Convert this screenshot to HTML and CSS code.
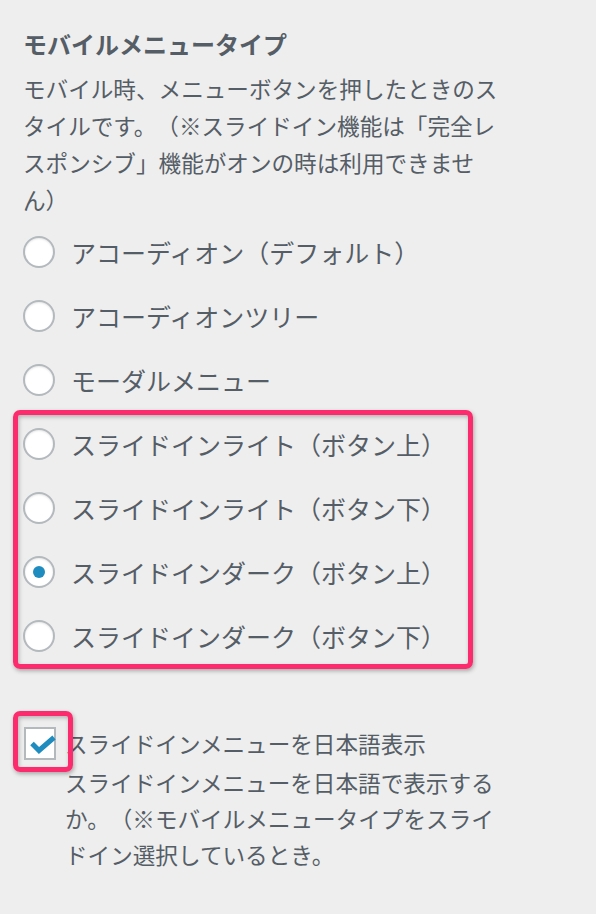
FILE: index.html
```html
<!DOCTYPE html>
<html lang="ja">
<head>
    <meta charset="UTF-8">
    <meta name="viewport" content="width=device-width, initial-scale=1.0">
    <title>モバイルメニュータイプ</title>
    <link rel="stylesheet" href="styles.css">
</head>
<body>
    <div class="panel">
        <h3 class="title">モバイルメニュータイプ</h3>
        <p class="desc">モバイル時、メニューボタンを押したときのスタイルです。（※スライドイン機能は「完全レスポンシブ」機能がオンの時は利用できません）</p>

        <div class="options">
            <label class="option"><input type="radio" name="menu_type"> アコーディオン（デフォルト）</label>
            <label class="option"><input type="radio" name="menu_type"> アコーディオンツリー</label>
            <label class="option"><input type="radio" name="menu_type"> モーダルメニュー</label>
            <div class="marked">
                <label class="option"><input type="radio" name="menu_type"> スライドインライト（ボタン上）</label>
                <label class="option"><input type="radio" name="menu_type"> スライドインライト（ボタン下）</label>
                <label class="option"><input type="radio" name="menu_type" checked> スライドインダーク（ボタン上）</label>
                <label class="option"><input type="radio" name="menu_type"> スライドインダーク（ボタン下）</label>
            </div>
        </div>

        <div class="check-row">
            <span class="checkbox">
                <svg width="32" height="33" viewBox="0 0 32 33">
                    <path d="M8 16.5 L15 23.5 L30 10.5" fill="none" stroke="#1e8cbe" stroke-width="5"/>
                </svg>
            </span>
            <div class="check-text">
                <div class="check-label">スライドインメニューを日本語表示</div>
                <p class="check-desc">スライドインメニューを日本語で表示するか。（※モバイルメニュータイプをスライドイン選択しているとき。</p>
            </div>
        </div>
    </div>
</body>
</html>
```

FILE: styles.css
```css
body {
    margin: 0;
    background-color: #eeeeee;
    color: #555d66;
    font-family: "Noto Sans CJK JP", "Noto Sans", sans-serif;
    text-spacing-trim: space-all;
}
.panel {
    width: 480px;
    padding: 25px 0 40px 23px;
}
.title {
    margin: 0;
    font-size: 24px;
    line-height: 37px;
    font-weight: bold;
}
.desc {
    margin: 8px 0 0;
    font-size: 22.6px;
    line-height: 37px;
}
.options {
    margin-top: 2px;
    display: flex;
    flex-direction: column;
}
.option {
    height: 64px;
    display: flex;
    align-items: center;
    gap: 16px;
    font-size: 25px;
}
.option input {
    appearance: none;
    -webkit-appearance: none;
    margin: 0;
    width: 32px;
    height: 32px;
    border: 2px solid #b4b9be;
    border-radius: 50%;
    background: #fff;
    box-shadow: inset 0 1px 2px rgba(0, 0, 0, 0.1);
    display: flex;
    align-items: center;
    justify-content: center;
    flex-shrink: 0;
}
.option input:checked::before {
    content: "";
    width: 12px;
    height: 12px;
    border-radius: 50%;
    background: #1e8cbe;
}
.marked {
    position: relative;
    display: flex;
    flex-direction: column;
}
.marked::before {
    content: "";
    position: absolute;
    top: -2px;
    bottom: -1px;
    left: -10px;
    width: 460px;
    box-sizing: border-box;
    border: 5px solid #fc2b6d;
    border-radius: 7px;
    box-shadow: 1px 2px 4px rgba(0, 0, 0, 0.3), inset 1px 2px 4px rgba(0, 0, 0, 0.25);
    pointer-events: none;
}
.check-row {
    margin-top: 56.5px;
    display: flex;
    align-items: flex-start;
}
.checkbox {
    position: relative;
    margin: 2.5px 9px 0 1px;
    width: 32px;
    height: 33px;
    box-sizing: border-box;
    border: 2px solid #b4b9be;
    background: #fff;
    flex-shrink: 0;
}
.checkbox svg {
    position: absolute;
    left: -2px;
    top: -2px;
}
.checkbox::after {
    content: "";
    position: absolute;
    left: -13px;
    top: -18px;
    width: 60px;
    height: 61px;
    box-sizing: border-box;
    border: 5px solid #fc2b6d;
    border-radius: 7px;
    box-shadow: 1px 2px 4px rgba(0, 0, 0, 0.3), inset 1px 2px 4px rgba(0, 0, 0, 0.25);
}
.check-text {
    width: 438px;
    font-size: 22.6px;
}
.check-label {
    line-height: 37px;
}
.check-desc {
    margin: 3px 0 0;
    line-height: 36px;
}
```
